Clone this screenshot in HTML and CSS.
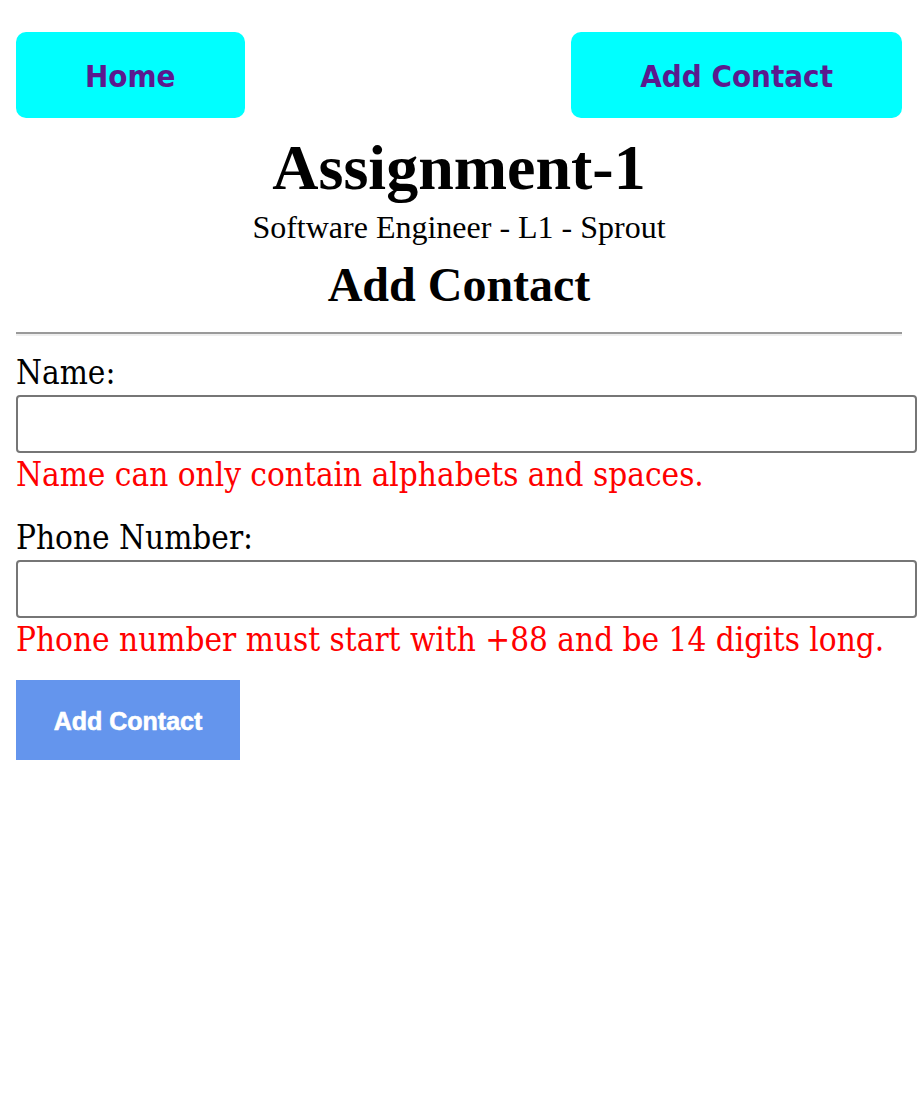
FILE: index.html
```html
<!DOCTYPE html>
<html lang="en">
<head>
<meta charset="utf-8">
<title>Add Contact</title>
<link rel="stylesheet" href="styles.css">
</head>
<body>
<div class="page">
  <nav class="nav">
    <a class="nav-btn" href="#">Home</a>
    <a class="nav-btn" href="#">Add Contact</a>
  </nav>
  <header class="header">
    <h1 class="title">Assignment-1</h1>
    <p class="subtitle">Software Engineer - L1 - Sprout</p>
    <h2 class="heading">Add Contact</h2>
  </header>
  <hr class="rule">
  <form class="form">
    <div class="field">
      <label class="label" for="name">Name:</label>
      <input class="input" id="name" type="text">
      <div class="error">Name can only contain alphabets and spaces.</div>
    </div>
    <div class="field">
      <label class="label" for="phone">Phone Number:</label>
      <input class="input" id="phone" type="text">
      <div class="error">Phone number must start with +88 and be 14 digits long.</div>
    </div>
    <button class="submit" type="button">Add Contact</button>
  </form>
</div>
</body>
</html>
```
FILE: styles.css
```css
html, body {
  margin: 0;
  padding: 0;
  background: #ffffff;
}

.page {
  padding: 32px 16px 0 16px;
  font-family: "Liberation Serif", "Times New Roman", serif;
  color: #000;
}

.nav {
  display: flex;
  justify-content: space-between;
  align-items: center;
}

.nav-btn {
  display: flex;
  align-items: center;
  justify-content: center;
  height: 86px;
  padding: 2px 69px 0 69px;
  box-sizing: border-box;
  background: #00ffff;
  border-radius: 10px;
  color: #5b1a8e;
  text-decoration: none;
  font-family: "DejaVu Sans", sans-serif;
  font-stretch: condensed;
  font-weight: bold;
  font-size: 31px;
}

.header {
  display: flex;
  flex-direction: column;
  align-items: center;
  text-align: center;
}

.title {
  margin: 14px 0 0 0;
  font-size: 64px;
  line-height: 72px;
  font-weight: bold;
}

.subtitle {
  margin: 4px 0 0 0;
  font-size: 32px;
  line-height: 38px;
}

.heading {
  margin: 12px 0 0 0;
  font-size: 48px;
  line-height: 54px;
  font-weight: bold;
}

.rule {
  margin: 20px 0 0 0;
  height: 0;
  border: 0;
  border-top: 2px solid #9a9a9a;
  border-bottom: 2px solid #eeeeee;
}

.form {
  display: flex;
  flex-direction: column;
  align-items: flex-start;
  margin-top: 17px;
  font-family: "DejaVu Serif", serif;
  font-stretch: condensed;
  font-size: 33px;
}

.field {
  display: flex;
  flex-direction: column;
  align-self: stretch;
  margin-bottom: 23px;
}

.label {
  line-height: 40px;
  margin-bottom: 2px;
}

.input {
  box-sizing: border-box;
  width: 901px;
  height: 58px;
  margin: 0;
  border: 2px solid #767676;
  border-radius: 4px;
  background: #fff;
  font-size: 28px;
}

.error {
  margin-top: 2px;
  line-height: 40px;
  color: #ff0000;
}

.submit {
  margin-top: -3px;
  width: 224px;
  height: 80px;
  padding: 2px 0 0 0;
  border: 0;
  background: #6495ed;
  color: #ffffff;
  font-family: "Liberation Sans", Arial, sans-serif;
  font-weight: bold;
  font-size: 25px;
  -webkit-text-stroke: 0.6px #ffffff;
}
```
